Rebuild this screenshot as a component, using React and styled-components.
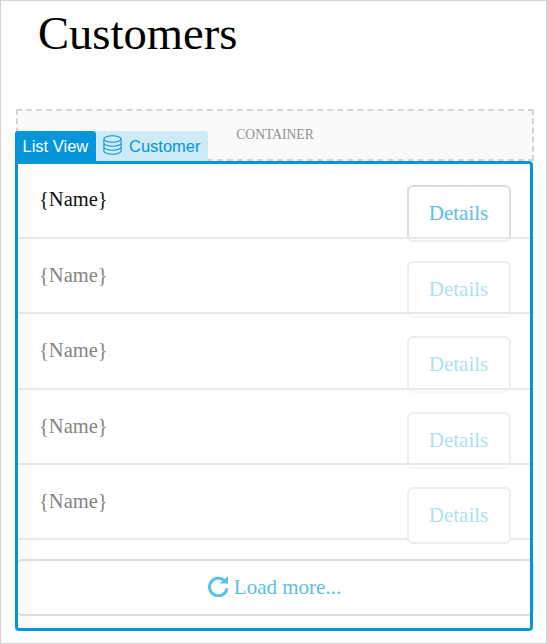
import React from "react";
import styled, { createGlobalStyle } from "styled-components";

const GlobalStyle = createGlobalStyle`
  *, *::before, *::after { box-sizing: border-box; }
  body { margin: 0; background: #fff; }
`;

const Page = styled.main`
  width: 547px;
  height: 644px;
  padding: 0 12px 0 15px;
  border: 1px solid #d4d4d4;
  background: #fff;
  overflow: hidden;
  font-family: "Liberation Serif", "Times New Roman", serif;
`;

const Title = styled.h1`
  margin: 0;
  height: 108px;
  padding: 5px 0 0 22px;
  font-size: 46.6px;
  line-height: 54px;
  font-weight: 400;
  color: #000;
`;

const Container = styled.section`
  position: relative;
  width: 518px;
  height: 52px;
  border: 2px dashed #d4d4d4;
  background: #fafafa;
  text-align: center;
  font-size: 13.6px;
  line-height: 47px;
  color: #8f8f8f;
`;

const Tabs = styled.div`
  position: absolute;
  left: -3px;
  bottom: -2px;
  display: flex;
  height: 30px;
  font-family: "Liberation Sans", Arial, sans-serif;
  font-size: 16.5px;
  line-height: 30px;
  text-align: left;
`;

const Tab = styled.div`
  display: flex;
  align-items: center;
  gap: 7px;
  width: ${(p) => (p.$active ? 81 : 112)}px;
  padding-left: ${(p) => (p.$active ? 7.5 : 7)}px;
  border-radius: ${(p) => (p.$active ? "3px 3px 0 0" : "0 3px 0 0")};
  background: ${(p) => (p.$active ? "#0595db" : "#cdeaf8")};
  color: ${(p) => (p.$active ? "#fff" : "#0595db")};
  white-space: nowrap;

  svg {
    margin-top: -3px;
  }
`;

const ListView = styled.section`
  position: relative;
  width: 518px;
  height: 470px;
  padding-top: 3px;

  &::after {
    content: "";
    position: absolute;
    inset: 0 1px 0 -1px;
    border: 3px solid #0595db;
    border-radius: 0 4px 4px 4px;
    pointer-events: none;
  }
`;

const Button = styled.button`
  flex: none;
  width: 104px;
  height: 57px;
  padding: 0 1px 1px 0;
  border: 2px solid #dcdcdc;
  border-radius: 6px;
  background: #fff;
  color: #5bc0e8;
  font: 21px "Liberation Serif", "Times New Roman", serif;
`;

const Row = styled.div`
  position: relative;
  display: flex;
  justify-content: space-between;
  align-items: flex-start;
  height: ${(p) => p.$height}px;
  padding: ${(p) => (p.$preview ? 22 : 21)}px 23px 0 23px;
  border: 0 solid #e8e8e8;
  border-top-width: ${(p) => (p.$preview ? 2 : 0)}px;
  border-bottom-width: ${(p) => (p.$last ? 2 : 0)}px;
  background: rgba(255, 255, 255, 0.5);
  background-clip: padding-box;

  ${Button} {
    border-color: ${(p) => (p.$preview ? "#ededed" : "#dcdcdc")};
    color: ${(p) => (p.$preview ? "#ade0f4" : "#5bc0e8")};
  }
`;

const Name = styled.span`
  margin-top: 2px;
  font-size: 20.5px;
  line-height: 24px;
  color: ${(p) => (p.$preview ? "#858585" : "#111")};
`;

const LoadMore = styled(Button)`
  display: flex;
  align-items: center;
  justify-content: center;
  gap: 5px;
  width: 518px;
  margin-top: 19px;
  padding-right: 1px;

  svg {
    margin-top: -2px;
  }
`;

const rows = [
  { height: 73 },
  { height: 75, preview: true },
  { height: 76, preview: true },
  { height: 75, preview: true },
  { height: 77, preview: true, last: true },
];

function DatabaseIcon() {
  return (
    <svg width="19" height="20" viewBox="0 0 19 20" fill="none" stroke="#0595db" strokeWidth="1.1">
      <ellipse cx="9.5" cy="4" rx="8.6" ry="3.3" />
      <path d="M.9 4v12c0 1.8 3.8 3.3 8.6 3.3s8.6-1.5 8.6-3.3V4M.9 8c0 1.8 3.8 3.3 8.6 3.3s8.6-1.5 8.6-3.3M.9 12c0 1.8 3.8 3.3 8.6 3.3s8.6-1.5 8.6-3.3" />
    </svg>
  );
}

function RepeatIcon() {
  return (
    <svg width="21" height="21" viewBox="0 0 21 21">
      <path d="M15.9 4.2A8.8 8.8 0 1 0 19 12.2" fill="none" stroke="#5bc0e8" strokeWidth="3" />
      <path d="M20 0v7.4h-8.3l2.6-2.5 3-2.4z" fill="#5bc0e8" />
    </svg>
  );
}

export default function App() {
  return (
    <>
      <GlobalStyle />
      <Page>
        <Title>Customers</Title>
        <Container>
          CONTAINER
          <Tabs>
            <Tab $active>List View</Tab>
            <Tab>
              <DatabaseIcon />
              Customer
            </Tab>
          </Tabs>
        </Container>
        <ListView>
          {rows.map((row, i) => (
            <Row key={i} $height={row.height} $preview={row.preview} $last={row.last}>
              <Name $preview={row.preview}>{"{Name}"}</Name>
              <Button>Details</Button>
            </Row>
          ))}
          <LoadMore>
            <RepeatIcon />
            Load more...
          </LoadMore>
        </ListView>
      </Page>
    </>
  );
}
